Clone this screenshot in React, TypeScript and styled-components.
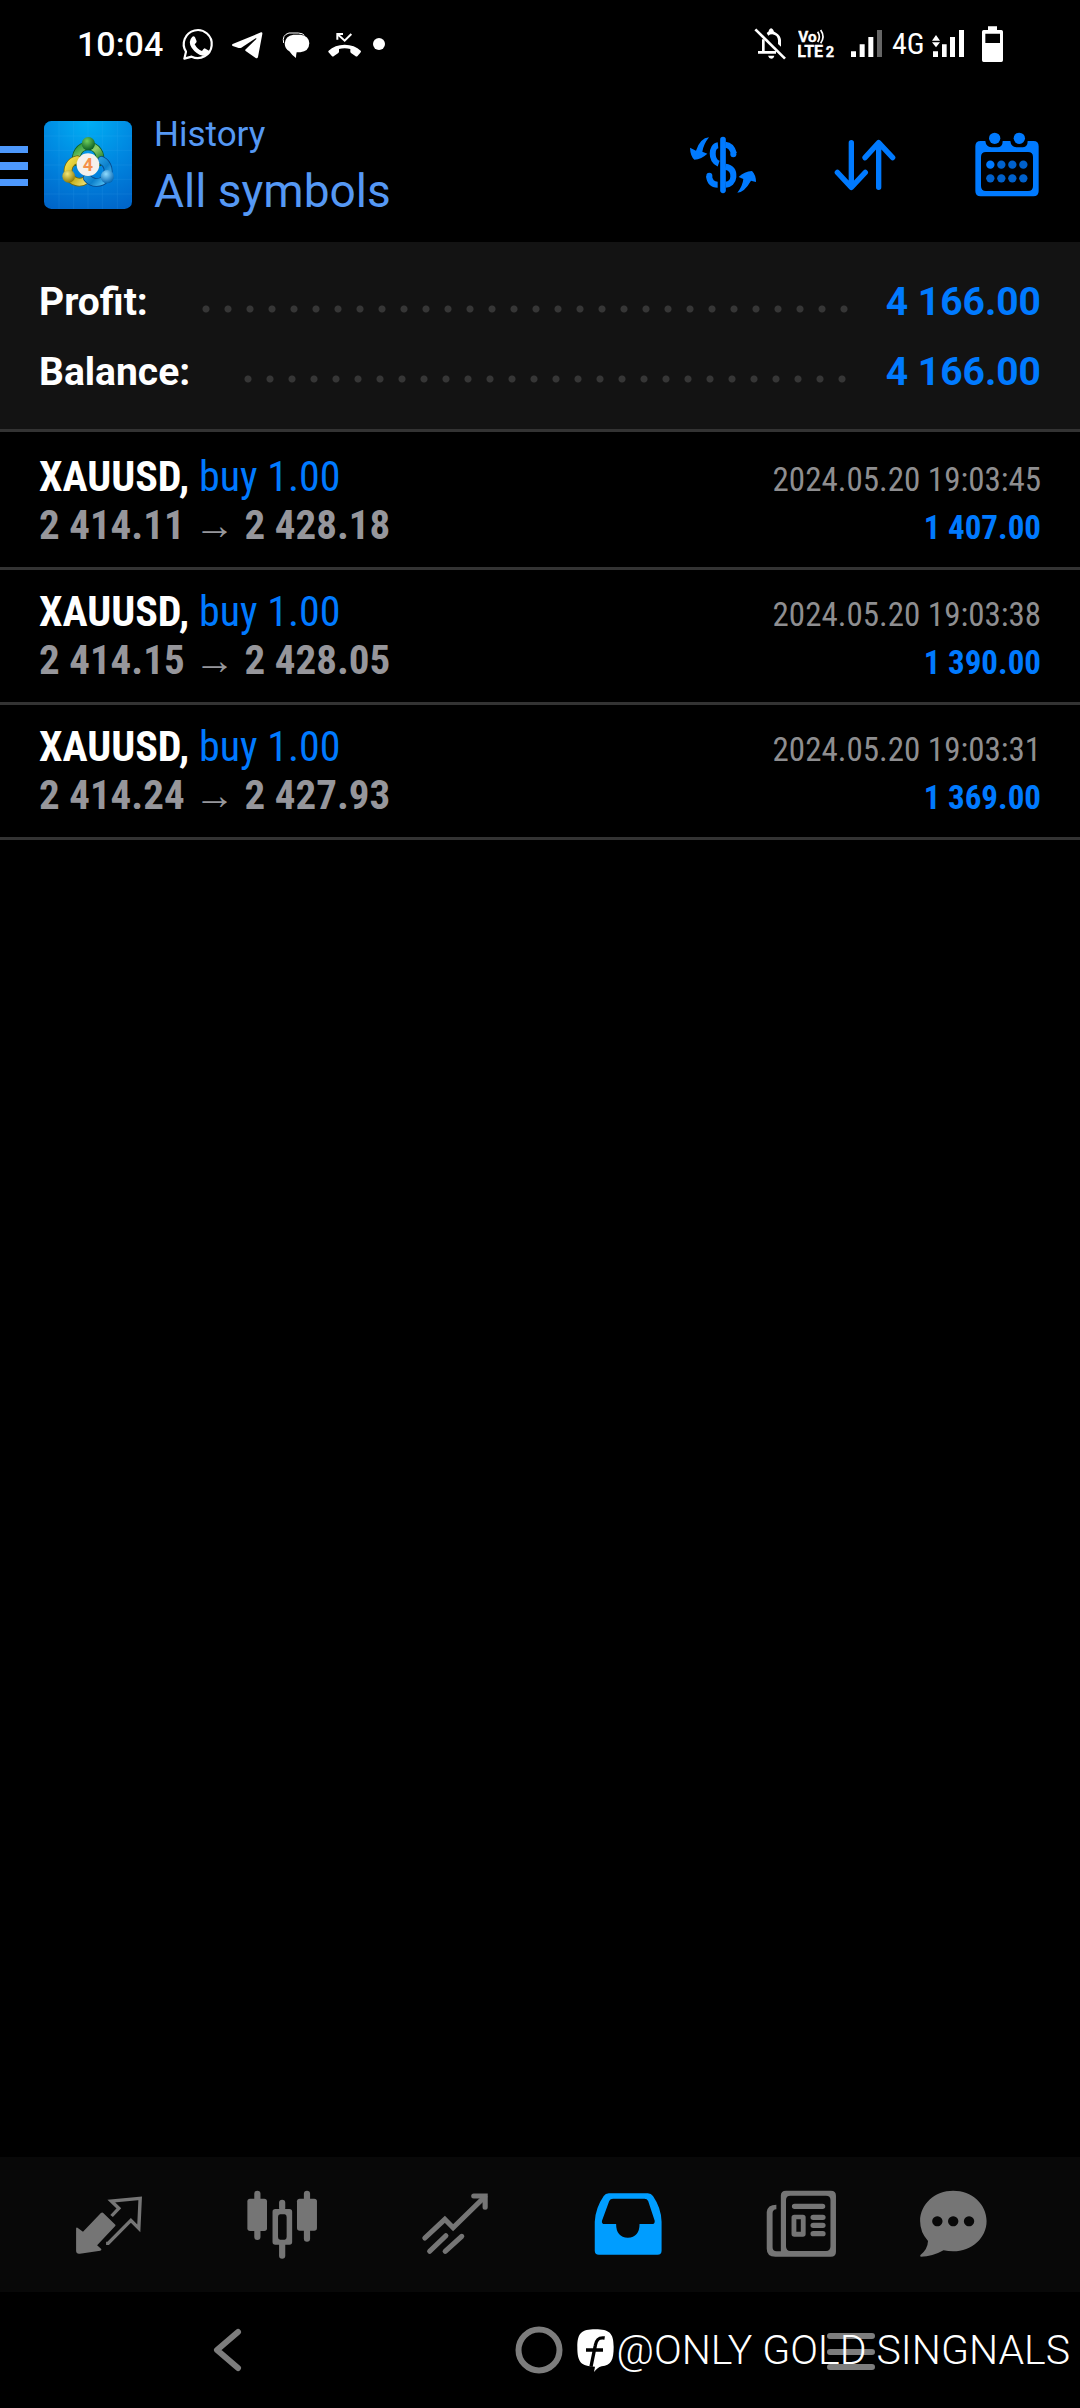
import React from "react";
import styled, { createGlobalStyle } from "styled-components";

const BLUE = "#007aff";
const CONDENSED = `"Roboto Condensed", Roboto, sans-serif`;

const GlobalStyle = createGlobalStyle`
  *, *::before, *::after { box-sizing: border-box; }
  body { margin: 0; background: #000; color: #fff; font-family: Roboto, sans-serif; }
  ul, dl, dd { margin: 0; padding: 0; list-style: none; }
  svg { display: block; flex: none; }
`;

const Screen = styled.div`
  display: flex;
  flex-direction: column;
  min-height: 100vh;
`;

/* ---------- status bar ---------- */

const StatusBar = styled.div`
  display: flex;
  align-items: center;
  justify-content: space-between;
  height: 88px;
  padding: 0 77px;
`;

const StatusGroup = styled.div<{ $gap: number }>`
  display: flex;
  align-items: center;
  gap: ${(p) => p.$gap}px;
`;

const Clock = styled.time`
  width: 91px;
  font-size: 34px;
  font-weight: 500;
  line-height: 40px;
`;

const NetworkType = styled.span`
  width: 32px;
  font-family: ${CONDENSED};
  font-size: 30px;
  line-height: 36px;
`;

const StatusIcon = ({ x, w, children }: { x: number; w: number; children: React.ReactNode }) => (
  <svg width={w} height="36" viewBox={`${x} 78 ${w * 3} 108`} fill="#fff" aria-hidden="true">
    {children}
  </svg>
);

/* ---------- header ---------- */

const Header = styled.header`
  display: flex;
  align-items: center;
  height: 154px;
  padding-right: 2px;
`;

const IconButton = styled.button<{ $width: number }>`
  display: flex;
  align-items: center;
  justify-content: center;
  width: ${(p) => p.$width}px;
  height: 88px;
  padding: 0;
  border: 0;
  background: none;
  color: ${BLUE};
`;

const MenuButton = styled(IconButton)`
  justify-content: flex-start;
  color: #4d98fc;
`;

const Titles = styled.div`
  flex: 1;
  padding: 2px 0 0 22px;
  color: #5598f4;
`;

const Caption = styled.div`
  font-size: 35px;
  line-height: 50px;
`;

const Title = styled.h1`
  margin: 0;
  font-size: 46px;
  font-weight: 400;
  line-height: 62px;
`;

/* ---------- summary ---------- */

const Summary = styled.dl`
  padding: 25px 39px 22px;
  background: #131313;
  border-bottom: 3px solid #333;
  font-size: 39px;
  font-weight: 700;
  line-height: 70px;
`;

const SummaryRow = styled.div`
  display: flex;
  align-items: center;
`;

const Leader = styled.span`
  flex: 1;
  height: 8px;
  margin: 13px 34px 0 54px;
  background: radial-gradient(circle at 4px 4px, #363636 3px, transparent 4px) 0 0 / 22px 8px repeat-x;
`;

const SummaryValue = styled.dd`
  color: ${BLUE};
`;

/* ---------- deals ---------- */

const Main = styled.main`
  flex: 1;
`;

const Deals = styled.ul`
  padding-top: 3px;
`;

const Deal = styled.li`
  padding: 18px 39px;
  border-bottom: 3px solid #333;
  font-family: ${CONDENSED};
  line-height: 48px;
`;

const Line = styled.div<{ $size: number }>`
  display: flex;
  align-items: baseline;
  justify-content: space-between;
  height: 48px;
  font-size: ${(p) => p.$size}px;
  white-space: nowrap;
`;

const Text = styled.span<{ $color: string; $bold?: boolean }>`
  color: ${(p) => p.$color};
  font-weight: ${(p) => (p.$bold ? 700 : 400)};
`;

const SmallText = styled(Text)`
  font-size: 33px;
`;

const Arrow = styled.span`
  font-family: "Liberation Sans", sans-serif;
  font-weight: 400;
`;

/* ---------- bottom ---------- */

const TabBar = styled.nav`
  display: grid;
  grid-template-columns: repeat(5, 173fr) 132fr;
  height: 135px;
  padding: 0 61px 0 22px;
  background: #080808;
`;

const Tab = styled.button<{ $active?: boolean }>`
  display: flex;
  align-items: center;
  justify-content: center;
  padding: 0;
  border: 0;
  background: none;
  color: ${(p) => (p.$active ? "#009dff" : "#757575")};
`;

const SystemNav = styled.div`
  position: relative;
  display: grid;
  grid-template-columns: repeat(3, 1fr);
  height: 116px;
  padding: 0 73px 0 72px;
`;

const NavButton = styled(Tab)`
  color: #7d7d7d;
`;

const Watermark = styled.div`
  position: absolute;
  right: 10px;
  top: 28px;
  display: flex;
  align-items: center;
  gap: 3px;
  font-size: 41px;
  font-weight: 300;
  line-height: 60px;
  white-space: nowrap;
`;

const TabIcon = ({ x, children }: { x: number; children: React.ReactNode }) => (
  <svg width="72" height="72" viewBox={`${x} 145 209 216`} preserveAspectRatio="none" fill="currentColor" aria-hidden="true">
    {children}
  </svg>
);

const WhatsAppIcon = () => (
  <StatusIcon x={540} w={36}>
    <path d="M553 176 L558 155 A42 42 0 1 1 575 170 Z" fill="none" stroke="#fff" strokeWidth="6.5" strokeLinejoin="round" />
    <path d="M577 110q5-3 8 2l5 12q0 4-6 9q8 15 22 20q5-8 8-8l13 7q2 3-1 8q-6 9-18 7q-20-5-33-24q-12-19 2-33z" />
  </StatusIcon>
);

const TelegramIcon = () => (
  <StatusIcon x={684} w={39}>
    <path d="M698 132 L783 97q5-1 4 5L774 171q-2 6-8 2L737 153q-3-3 1-6L769 117q1-3-2-2L724 143q-4 2-8 1L698 138q-4-3 0-6z" />
  </StatusIcon>
);

const ChatIcon = () => (
  <StatusIcon x={837} w={37}>
    <path d="M851 129q-6-24 16-30h28q14 1 18 7" fill="none" stroke="#fff" strokeWidth="3" />
    <path d="M880 104h22q25 3 26 26q-1 24-27 27h-11q-2 8-2 17q-13-9-20-20q-13-7-14-23q2-24 26-27z" />
  </StatusIcon>
);

const MissedCallIcon = () => (
  <StatusIcon x={984} w={33}>
    <path d="M985 153q20-19 49-19t49 19q0 3-2 5l-9 11q-3 2-6-1l-13-9q-3-2-2-12q-17-4-34 0q1 10-2 12l-13 9q-3 3-6 1l-9-11q-3-2-2-5z" />
    <path d="M1012 119v-17h17M1013 103l21 19 20-20" fill="none" stroke="#fff" strokeWidth="6" />
  </StatusIcon>
);

const BellOffIcon = () => (
  <StatusIcon x={282} w={36}>
    <path d="M286 88 L375 176" stroke="#fff" strokeWidth="8" />
    <path d="M310 118V153M294 157H348" stroke="#fff" strokeWidth="8" fill="none" />
    <path d="M320 99q8-4 7-9q6-11 13 0q-1 5 8 8q14 8 15 22v20l-9-8v-11q-1-16-17-18q-8 0-12 4z" />
    <path d="M324 167h19q-2 9-9 9t-10-9z" />
  </StatusIcon>
);

const VolteIcon = () => (
  <svg width="44" height="36" viewBox="414 78 132 108" fill="#fff" stroke="#fff" strokeWidth="1" fontFamily="Roboto, sans-serif" fontWeight="700">
    <text x="415" y="127" fontSize="46">Vo</text>
    <text x="412" y="171" fontSize="48">LTE</text>
    <text x="497" y="171" fontSize="44">2</text>
    <path d="M473 95q10 15 0 31M482 90q14 20 0 40" fill="none" strokeWidth="5" />
  </svg>
);

const SignalIcon = () => (
  <StatusIcon x={570} w={34}>
    <path d="M573 154h15v17h-15zM599 133h15v38h-15zM625 111h15v60h-15z" />
    <path d="M651 90h15v81h-15z" opacity=".4" />
  </StatusIcon>
);

const DataSignalIcon = () => (
  <StatusIcon x={816} w={42}>
    <path d="M816 122l12-17 12 17zM816 127h24l-12 15zM819 154h15v17h-15zM846 133h14v38h-14zM870 111h15v60h-15zM897 90h15v81h-15z" />
  </StatusIcon>
);

const BatteryIcon = () => (
  <StatusIcon x={966} w={21}>
    <path fillRule="evenodd" d="M984 79h27v11h13q5 0 5 5v86q0 5-5 5h-53q-5 0-5-5V95q0-5 5-5h13zM976 101v28h44v-28z" />
  </StatusIcon>
);

const AppLogo = () => (
  <svg width="88" height="88" viewBox="132 63 264 264" role="img" aria-label="MetaTrader 4">
    <defs>
      <radialGradient id="sky" cx=".5" cy="0" r="1.1">
        <stop offset="0" stopColor="#00b0f5" />
        <stop offset=".5" stopColor="#0087e0" />
        <stop offset="1" stopColor="#0063c8" />
      </radialGradient>
      <linearGradient id="green" x1="0" y1="0" x2="1" y2="1">
        <stop offset="0" stopColor="#2a9b3c" />
        <stop offset=".5" stopColor="#8fd06a" />
        <stop offset="1" stopColor="#13752a" />
      </linearGradient>
      <linearGradient id="yellow" x1="0" y1="0" x2="1" y2="1">
        <stop offset="0" stopColor="#f4e04c" />
        <stop offset=".6" stopColor="#c9b21c" />
        <stop offset="1" stopColor="#e8dd70" />
      </linearGradient>
      <linearGradient id="azure" x1="0" y1="0" x2="1" y2="1">
        <stop offset="0" stopColor="#3db4ee" />
        <stop offset=".6" stopColor="#0b7fcb" />
        <stop offset="1" stopColor="#5cc8f8" />
      </linearGradient>
      <radialGradient id="greenHead" cx=".4" cy=".3" r=".7">
        <stop offset="0" stopColor="#6fce5c" />
        <stop offset="1" stopColor="#0a5d22" />
      </radialGradient>
      <radialGradient id="yellowHead" cx=".4" cy=".3" r=".7">
        <stop offset="0" stopColor="#f3e87a" />
        <stop offset="1" stopColor="#8f7c08" />
      </radialGradient>
      <radialGradient id="azureHead" cx=".4" cy=".3" r=".7">
        <stop offset="0" stopColor="#8fdcff" />
        <stop offset="1" stopColor="#0567b4" />
      </radialGradient>
    </defs>
    <rect x="132" y="63" width="264" height="264" rx="22" fill="url(#sky)" />
    <path d="M221 63V327M264 63V327M307 63V327M132 151H396M132 195H396M132 238H396M352 63V327M177 63V327M132 108H396M132 282H396" stroke="#5cc0ff" strokeWidth="1.5" opacity=".22" />
    <g fill="none" strokeLinecap="round">
      <path d="M232 186A35 35 0 1 1 297 186" stroke="#0f5d2b" strokeWidth="26" />
      <path d="M232 186A35 35 0 1 1 297 186" stroke="url(#green)" strokeWidth="21" />
      <path d="M258 240A34 34 0 1 1 232 179" stroke="#6e6a12" strokeWidth="26" />
      <path d="M258 240A34 34 0 1 1 232 179" stroke="url(#yellow)" strokeWidth="21" />
      <path d="M305 181A35 35 0 1 1 262 234" stroke="#06498c" strokeWidth="26" />
      <path d="M305 181A35 35 0 1 1 262 234" stroke="url(#azure)" strokeWidth="21" />
    </g>
    <circle cx="265" cy="131" r="20" fill="url(#greenHead)" />
    <circle cx="206" cy="229" r="19" fill="url(#yellowHead)" />
    <circle cx="322" cy="230" r="20" fill="url(#azureHead)" />
    <circle cx="264" cy="194" r="34" fill="#f4f1ec" />
    <text x="264" y="213" textAnchor="middle" fontFamily="Roboto, sans-serif" fontSize="54" fontWeight="700" fill="#f4914a">4</text>
  </svg>
);

const DollarIcon = () => (
  <svg width="70" height="66" viewBox="81 396 210 198" fill="currentColor" aria-hidden="true">
    <path d="M186 419V571" stroke="currentColor" strokeWidth="17" strokeLinecap="round" />
    <path d="M171 436C151 438 148 482 173 491M193 434C207 435 215 446 219 461M144 528C146 546 155 554 170 554M193 500C214 503 218 518 217 531C216 545 206 553 194 554" fill="none" stroke="currentColor" strokeWidth="18" />
    <circle cx="217" cy="463" r="9" />
    <circle cx="145" cy="527" r="9" />
    <path d="M144 412Q118 414 105 452L87 443Q88 468 100 479Q122 477 139 461L124 455Q128 432 144 412z" />
    <path d="M229 578Q250 577 270 542L285 546Q285 525 273 513Q250 515 233 531L247 537Q245 558 229 578z" />
  </svg>
);

const SortIcon = () => (
  <svg width="66" height="66" viewBox="516 396 198 198" fill="none" stroke="currentColor" strokeWidth="16" strokeLinecap="round" strokeLinejoin="round" aria-hidden="true">
    <path d="M574 428V562M532 517L574 562L616 517M656 562V428M615 473L656 428L698 473" />
  </svg>
);

const CalendarIcon = () => (
  <svg width="66" height="66" viewBox="941 393 198 198" fill="currentColor" aria-hidden="true">
    <path fillRule="evenodd" d="M961 420h14q2 18 18 19h20q14-2 14-19h23q2 18 18 19h20q14-2 14-19h17q16 0 16 16v134q0 16-16 16H961q-16 0-16-16V436q0-16 16-16zM977 453q-15 0-15 15v87q0 15 15 15h126q15 0 15-15v-87q0-15-15-15z" />
    <circle cx="1003" cy="412" r="17" />
    <circle cx="1077" cy="412" r="17" />
    <circle cx="990" cy="491" r="12.500" />
    <g opacity=".8">
      {[1023, 1056, 1089].map((x) => <circle key={x} cx={x} cy="491" r="12.500" />)}
      {[990, 1023, 1056, 1089].map((x) => <circle key={x} cx={x} cy="532" r="12.500" />)}
    </g>
  </svg>
);

const FacebookMark = () => (
  <svg width="37" height="43" viewBox="52 59 111 129" aria-hidden="true">
    <path fill="#fff" d="M107 60c42 0 55 11 55 53c0 40-8 55-36 58c-10 2-14 8-23 17l3-16c-42 0-53-14-53-58c0-43 12-54 54-54z" />
    <path d="M135 86c-19-3-25 5-28 22L94 172M79 122H130" fill="none" stroke="#000" strokeWidth="10" />
  </svg>
);

const deals = [
  { from: "2 414.11", to: "2 428.18", time: "2024.05.20 19:03:45", profit: "1 407.00" },
  { from: "2 414.15", to: "2 428.05", time: "2024.05.20 19:03:38", profit: "1 390.00" },
  { from: "2 414.24", to: "2 427.93", time: "2024.05.20 19:03:31", profit: "1 369.00" },
];

const totals = [
  { label: "Profit:", value: "4 166.00" },
  { label: "Balance:", value: "4 166.00" },
];

export default function App() {
  return (
    <Screen>
      <GlobalStyle />
      <StatusBar>
        <StatusGroup $gap={12}>
          <Clock>10:04</Clock>
          <WhatsAppIcon />
          <TelegramIcon />
          <ChatIcon />
          <MissedCallIcon />
          <svg width="12" height="12" viewBox="0 0 12 12" aria-hidden="true"><circle cx="6" cy="6" r="6" fill="#fff" /></svg>
        </StatusGroup>
        <StatusGroup $gap={8}>
          <BellOffIcon />
          <VolteIcon />
          <SignalIcon />
          <NetworkType>4G</NetworkType>
          <DataSignalIcon />
          <BatteryIcon />
        </StatusGroup>
      </StatusBar>

      <Header>
        <MenuButton $width={44} aria-label="Menu">
          <svg width="28" height="42" viewBox="0 0 28 42" fill="currentColor" aria-hidden="true">
            <path d="M0 2h28v7H0zM0 18h28v8H0zM0 35h28v7H0z" />
          </svg>
        </MenuButton>
        <AppLogo />
        <Titles>
          <Caption>History</Caption>
          <Title>All symbols</Title>
        </Titles>
        <IconButton $width={142} aria-label="Currency"><DollarIcon /></IconButton>
        <IconButton $width={142} aria-label="Sort"><SortIcon /></IconButton>
        <IconButton $width={142} aria-label="Period"><CalendarIcon /></IconButton>
      </Header>

      <Main>
        <Summary>
          {totals.map((t) => (
            <SummaryRow key={t.label}>
              <dt>{t.label}</dt>
              <Leader />
              <SummaryValue>{t.value}</SummaryValue>
            </SummaryRow>
          ))}
        </Summary>
        <Deals>
          {deals.map((d) => (
            <Deal key={d.time}>
              <Line $size={42}>
                <span>
                  <Text $color="#fff" $bold>XAUUSD,</Text> <Text $color={BLUE}>buy 1.00</Text>
                </span>
                <SmallText $color="#8e8e90">{d.time}</SmallText>
              </Line>
              <Line $size={41}>
                <Text $color="#96969b" $bold>{d.from} <Arrow>→</Arrow> {d.to}</Text>
                <SmallText $color={BLUE} $bold>{d.profit}</SmallText>
              </Line>
            </Deal>
          ))}
        </Deals>
      </Main>

      <TabBar>
        <Tab aria-label="Quotes">
          <TabIcon x={210}>
            <path d="M297 216l36 36q1 3-1 5l-52 57 12 11q2 4-3 5l-59 9q-10 2-11-8v-68q1-4 4-2l16 12 52-56q3-3 6-1z" />
            <path d="M322 226l21-23-22-22 84-8-4 90-23-24-66 69h-6" fill="none" stroke="currentColor" strokeWidth="10" />
          </TabIcon>
        </Tab>
        <Tab aria-label="Charts">
          <TabIcon x={711}>
            <rect x="735" y="150" width="18" height="148" rx="9" />
            <rect x="715" y="174" width="57" height="97" rx="8" />
            <rect x="879" y="150" width="18" height="153" rx="9" />
            <rect x="859" y="174" width="58" height="96" rx="8" />
            <rect x="807" y="177" width="18" height="34" rx="9" />
            <rect x="807" y="300" width="18" height="54" rx="9" />
            <path fillRule="evenodd" d="M796 205h41q8 0 8 8v91q0 8-8 8h-41q-8 0-8-8v-91q0-8 8-8zM810 221q-6 0-6 8v60q0 8 6 8h13q6 0 6-8v-60q0-8-6-8z" />
          </TabIcon>
        </Tab>
        <Tab aria-label="Trade">
          <TabIcon x={1214}>
            <g fill="none" stroke="currentColor" strokeWidth="15" strokeLinecap="round">
              <path d="M1231 292L1289 236L1313 261L1405 168" />
              <path d="M1373 166H1406V200" />
              <path d="M1245 332L1292 285M1290 332L1338 287" />
            </g>
          </TabIcon>
        </Tab>
        <Tab $active aria-label="History" aria-current="page">
          <TabIcon x={149}>
            <path fillRule="evenodd" d="M198 158h113q10 0 15 8q24 36 25 77v87q0 12-12 12H169q-12 0-12-12v-87q2-41 26-77q5-8 15-8zM210 174q-8 0-11 7l-21 59q-2 10 8 10h33q0 40 34 41q34-1 34-41h36q9 0 8-10l-19-59q-3-7-11-7z" />
          </TabIcon>
        </Tab>
        <Tab aria-label="News">
          <TabIcon x={652}>
            <path fillRule="evenodd" d="M713 150h130q15 0 15 15v168q0 15-15 15H682q-25 0-25-24V214q2-22 28-22v14q-11 1-11 12v102q0 12 12 12h12V165q0-15 15-15zM726 165q-13 0-13 13v139q0 14 13 14h103q13 0 13-14V178q0-13-13-13z" />
            <path fillRule="evenodd" d="M737 222h25q8 0 8 8v50q0 8-8 8h-25q-8 0-8-8v-50q0-8 8-8zM743 236v37h13v-37z" />
            <path d="M738 197H819M792 230H820M792 254H820M792 279H820" stroke="currentColor" strokeWidth="16" strokeLinecap="round" />
          </TabIcon>
        </Tab>
        <Tab aria-label="Messages">
          <TabIcon x={1094}>
            <path fillRule="evenodd" d="M1199 150c54 0 97 40 97 91s-43 91-97 91q-14 0-28-3q-32 19-66 19q-3-2-1-5q21-17 22-42q-23-26-23-60c0-51 43-91 96-91zM1153 227a15 15 0 1 0 .1 0zM1199 227a15 15 0 1 0 .1 0zM1245 227a15 15 0 1 0 .1 0z" />
          </TabIcon>
        </Tab>
      </TabBar>

      <SystemNav>
        <NavButton aria-label="Back">
          <svg width="48" height="48" viewBox="0 0 48 48" fill="none" stroke="currentColor" strokeWidth="6" strokeLinecap="round" strokeLinejoin="round" aria-hidden="true">
            <path d="M34 6L13 24L34 42" />
          </svg>
        </NavButton>
        <NavButton aria-label="Home">
          <svg width="48" height="48" viewBox="0 0 48 48" fill="none" stroke="currentColor" strokeWidth="6" aria-hidden="true">
            <circle cx="24" cy="24" r="20.500" />
          </svg>
        </NavButton>
        <NavButton aria-label="Recent apps">
          <svg width="48" height="48" viewBox="0 0 48 48" stroke="currentColor" strokeWidth="6" strokeLinecap="round" aria-hidden="true">
            <path d="M3 10H45M3 26H45M3 41H45" />
          </svg>
        </NavButton>
        <Watermark>
          <FacebookMark />
          <span>@ONLY GOLD SINGNALS</span>
        </Watermark>
      </SystemNav>
    </Screen>
  );
}
